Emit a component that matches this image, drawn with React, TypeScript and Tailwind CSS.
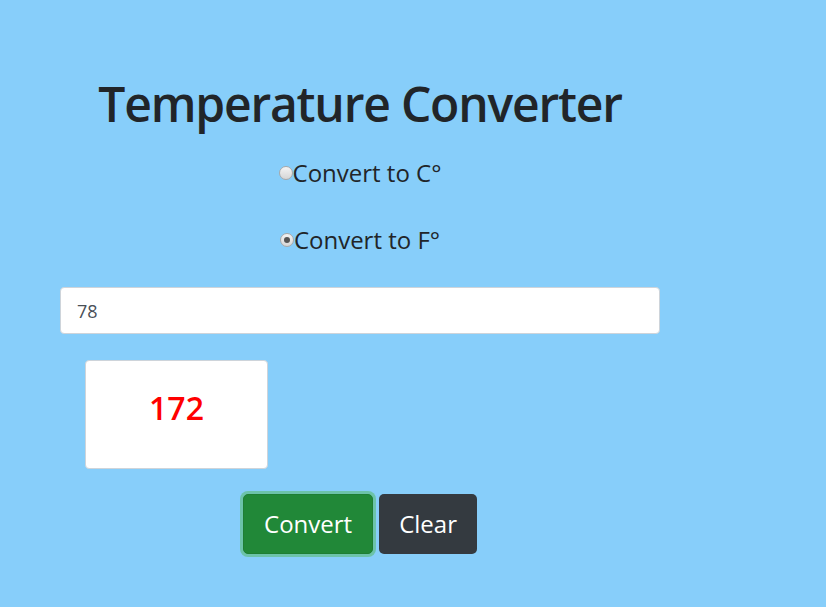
import React, { useState } from 'react';

const font = { fontFamily: '"Open Sans", "Noto Sans", sans-serif' };

const Radio: React.FC<{ checked: boolean; label: string; onClick: () => void }> = ({ checked, label, onClick }) => (
  <label className="flex items-center cursor-pointer text-[24px] leading-[36px] text-[#212529]" onClick={onClick}>
    <span className="w-[14px] h-[14px] rounded-full border border-[#a9a9a9] bg-gradient-to-b from-[#f4f4f4] to-[#d6d6d6] flex items-center justify-center">
      {checked && <span className="w-[6px] h-[6px] rounded-full bg-[#555]" />}
    </span>
    <span>{label}</span>
  </label>
);

export default function App() {
  const [mode, setMode] = useState<'c' | 'f'>('f');
  const [value, setValue] = useState('78');

  return (
    <div className="min-h-screen bg-[#87cefa]" style={font}>
      <div className="w-[600px] ml-[60px] pt-[75px] flex flex-col items-center">
        <h1 className="text-[48px] leading-[58px] font-semibold text-[#212529] tracking-[-1.2px]">Temperature Converter</h1>
        <div className="mt-[22px] flex flex-col items-center gap-[31px]">
          <Radio checked={mode === 'c'} label="Convert to C°" onClick={() => setMode('c')} />
          <Radio checked={mode === 'f'} label="Convert to F°" onClick={() => setMode('f')} />
        </div>
        <input
          value={value}
          onChange={e => setValue(e.target.value)}
          className="mt-[29px] w-full h-[47px] bg-white border border-[#ced4da] rounded-[4px] px-[16px] text-[18px] text-[#495057] outline-none"
        />
        <div className="self-start ml-[25px] mt-[26px] w-[183px] h-[109px] bg-white border border-[#ced4da] rounded-[4px] flex items-center justify-center pb-[14px]">
          <span className="text-[32px] font-semibold text-[#ff0000]">172</span>
        </div>
        <div className="mt-[25px] flex gap-[6px]">
          <button className="h-[60px] px-[20px] text-[24px] text-white bg-[#218838] border border-[#1e7e34] rounded-[5px] ring-[3px] ring-[#6cc3aa]">
            Convert
          </button>
          <button className="h-[60px] px-[20px] text-[24px] text-white bg-[#343a40] rounded-[5px]">Clear</button>
        </div>
      </div>
    </div>
  );
}
